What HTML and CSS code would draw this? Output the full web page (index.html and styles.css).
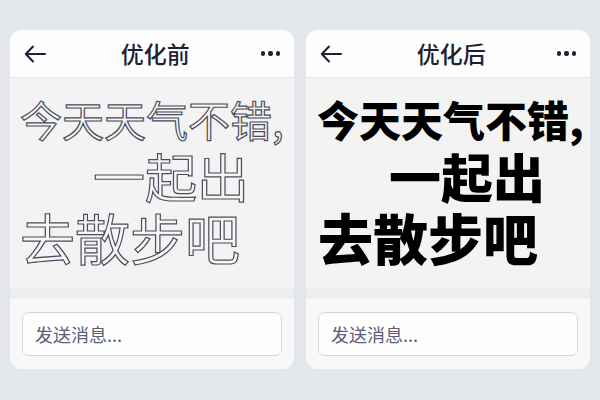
FILE: index.html
```html
<!DOCTYPE html>
<html lang="zh">
<head>
<meta charset="utf-8">
<link rel="stylesheet" href="styles.css">
</head>
<body>
<div class="stage">
  <div class="card">
    <div class="header">
      <svg class="back" width="22" height="18" viewBox="0 0 22 18"><path d="M21 9H2M9 1.5L1.8 9L9 16.5" fill="none" stroke="#1d2133" stroke-width="2" stroke-linecap="round" stroke-linejoin="round"/></svg>
      <div class="title">优化前</div>
      <div class="dots"><span></span><span></span><span></span></div>
    </div>
    <div class="body outline">
      <div class="l1">今天天气不错,</div>
      <div class="l2">一起出</div>
      <div class="l3">去散步吧</div>
    </div>
    <div class="footer">
      <div class="input">发送消息...</div>
    </div>
  </div>
  <div class="card">
    <div class="header">
      <svg class="back" width="22" height="18" viewBox="0 0 22 18"><path d="M21 9H2M9 1.5L1.8 9L9 16.5" fill="none" stroke="#1d2133" stroke-width="2" stroke-linecap="round" stroke-linejoin="round"/></svg>
      <div class="title">优化后</div>
      <div class="dots"><span></span><span></span><span></span></div>
    </div>
    <div class="body bold">
      <div class="l1">今天天气不错,</div>
      <div class="l2">一起出</div>
      <div class="l3">去散步吧</div>
    </div>
    <div class="footer">
      <div class="input">发送消息...</div>
    </div>
  </div>
</div>
</body>
</html>
```
FILE: styles.css
```css
* { box-sizing: border-box; }
html, body { margin: 0; padding: 0; }
body {
  width: 600px;
  height: 400px;
  background: #e3e6eb;
  font-family: "Noto Sans CJK SC", "Noto Sans", sans-serif;
  overflow: hidden;
}
.stage {
  display: flex;
  gap: 12px;
  padding: 30px 10px 0 10px;
}
.card {
  width: 284px;
  height: 339px;
  border-radius: 12px;
  overflow: hidden;
  display: flex;
  flex-direction: column;
  background: #f7f7f8;
}
.header {
  height: 48px;
  background: #fdfdfd;
  display: flex;
  align-items: center;
  justify-content: space-between;
  padding: 0 14px 0 14px;
  border-bottom: 1px solid #ececee;
}
.back { display: block; }
.title {
  font-size: 23px;
  font-weight: 500;
  color: #1d2133;
  line-height: 1;
  margin-left: 4px;
}
.dots { display: flex; gap: 3px; }
.dots span {
  width: 4.5px;
  height: 4.5px;
  border-radius: 50%;
  background: #1d2133;
}
.body {
  flex: 1;
  background: linear-gradient(#f3f3f4 0, #f3f3f4 211px, #eceef0 211px);
  padding: 16px 0 0 10px;
  white-space: nowrap;
}
.body .l1 { font-size: 42px; line-height: 50px; }
.body .l2 { font-size: 52px; line-height: 60px; margin-left: 73px; margin-top: 2px; }
.body .l3 { font-size: 55px; line-height: 60px; }
.outline {
  color: #f6f6f7;
  font-weight: 400;
  -webkit-text-stroke: 1.2px #4a4d5a;
}
.bold {
  color: #000;
  font-weight: 900;
}
.bold .l1 { margin-left: 1px; }
.bold .l3 { margin-left: 2px; }
.footer {
  height: 70px;
  background: #f8f8f9;
  padding: 13px 12px 0 12px;
}
.input {
  height: 44px;
  background: #fefefe;
  border: 1px solid #d3d6dd;
  border-radius: 7px;
  padding: 0 12px;
  display: flex;
  align-items: center;
  font-size: 18px;
  color: #5a5f78;
}
```
